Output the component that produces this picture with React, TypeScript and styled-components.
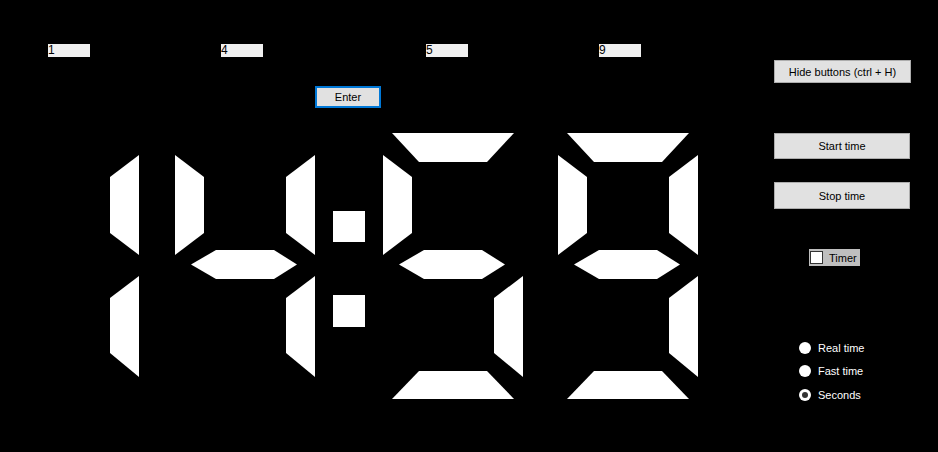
import React from "react";
import styled, { createGlobalStyle } from "styled-components";

const Global = createGlobalStyle`
  html, body { margin: 0; padding: 0; background: #000; }
  body { font-family: "Liberation Sans", Arial, sans-serif; }
  * { box-sizing: border-box; }
`;

const Window = styled.div`
  width: 938px;
  height: 452px;
  background: #000;
  display: flex;
  overflow: hidden;
`;

const Main = styled.div`
  width: 774px;
  display: flex;
  flex-direction: column;
  align-items: flex-start;
  padding-top: 44px;
`;

const InputRow = styled.div`
  display: flex;
  height: 13px;
`;

const Field = styled.input<{ $gap: number }>`
  margin: 0 0 0 ${(p) => p.$gap}px;
  width: 42px;
  height: 13px;
  border: none;
  padding: 0 0 0 0;
  background: #f0f0f0;
  font: 12px/13px "Liberation Sans", Arial, sans-serif;
  color: #000;
  outline: none;
`;

const WinButton = styled.button<{ $w: number; $h: number; $mt: number; $ml?: number; $focused?: boolean }>`
  margin: ${(p) => p.$mt}px 0 0 ${(p) => p.$ml ?? 0}px;
  width: ${(p) => p.$w}px;
  height: ${(p) => p.$h}px;
  padding: 0;
  background: #e1e1e1;
  border: ${(p) => (p.$focused ? "2px solid #0078d7" : "1px solid #adadad")};
  font: 11px "Liberation Sans", Arial, sans-serif;
  color: #000;
  display: flex;
  align-items: center;
  justify-content: center;
  cursor: default;
`;

const Clock = styled.svg`
  margin: 12px 0 0 100px;
  display: block;
`;

const Side = styled.div`
  flex: 1;
  display: flex;
  flex-direction: column;
  align-items: flex-start;
  padding-top: 60px;
`;

const CheckControl = styled.label`
  margin: 40px 0 0 35px;
  width: 51px;
  height: 17px;
  background: #bfbfbf;
  display: flex;
  align-items: center;
  font: 11px "Liberation Sans", Arial, sans-serif;
  color: #000;
`;

const CheckBox = styled.span`
  width: 13px;
  height: 13px;
  margin-left: 1px;
  background: #fff;
  border: 1px solid #333;
`;

const CheckText = styled.span`
  margin-left: 6px;
`;

const RadioGroup = styled.div`
  margin: 70px 0 0 25px;
  display: flex;
  flex-direction: column;
`;

const RadioRow = styled.label`
  height: 23.5px;
  display: flex;
  align-items: center;
  font: 11px "Liberation Sans", Arial, sans-serif;
  color: #fff;
`;

const RadioDot = styled.span<{ $checked?: boolean }>`
  width: 12px;
  height: 12px;
  border-radius: 50%;
  background: #fff;
  display: flex;
  align-items: center;
  justify-content: center;
  &::after {
    content: "";
    width: 6px;
    height: 6px;
    border-radius: 50%;
    background: ${(p) => (p.$checked ? "#333" : "transparent")};
  }
`;

const RadioText = styled.span`
  margin-left: 7px;
`;

type Seg = "a" | "b" | "c" | "d" | "e" | "f" | "g";

const SEGMENTS: Record<Seg, [number, number][]> = {
  a: [[9, 133], [131, 133], [104, 162], [36, 162]],
  b: [[140, 155], [140, 255], [111, 233], [111, 177]],
  c: [[140, 276], [140, 377], [111, 353], [111, 298]],
  d: [[9, 399], [131, 399], [104, 371], [36, 371]],
  e: [[0, 276], [29, 298], [29, 353], [0, 377]],
  f: [[0, 155], [29, 177], [29, 233], [0, 255]],
  g: [[16, 264.5], [41, 250], [99, 250], [122, 264.5], [99, 279], [41, 279]],
};

const DIGIT_SEGS: Record<string, Seg[]> = {
  "1": ["b", "c"],
  "4": ["f", "g", "b", "c"],
  "5": ["a", "f", "g", "c", "d"],
  "9": ["a", "b", "f", "g", "c", "d"],
};

const Digit: React.FC<{ value: string; x: number }> = ({ value, x }) => (
  <g>
    {DIGIT_SEGS[value].map((s) => (
      <polygon key={s} points={SEGMENTS[s].map(([px, py]) => `${px + x},${py}`).join(" ")} fill="#fff" />
    ))}
  </g>
);

export default function App() {
  return (
    <>
      <Global />
      <Window>
        <Main>
          <InputRow>
            <Field $gap={48} defaultValue="1" />
            <Field $gap={131} defaultValue="4" />
            <Field $gap={163} defaultValue="5" />
            <Field $gap={131} defaultValue="9" />
          </InputRow>
          <WinButton $w={66} $h={22} $mt={29} $ml={315} $focused>
            Enter
          </WinButton>
          <Clock width={620} height={290} viewBox="100 120 620 290">
            <Digit value="1" x={-1} />
            <Digit value="4" x={175} />
            <rect x={333} y={211} width={32} height={31} fill="#fff" />
            <rect x={333} y={295} width={32} height={32} fill="#fff" />
            <Digit value="5" x={383} />
            <Digit value="9" x={558} />
          </Clock>
        </Main>
        <Side>
          <WinButton $w={137} $h={23} $mt={0}>Hide buttons (ctrl + H)</WinButton>
          <WinButton $w={136} $h={26} $mt={50}>Start time</WinButton>
          <WinButton $w={136} $h={27} $mt={23}>Stop time</WinButton>
          <CheckControl>
            <CheckBox />
            <CheckText>Timer</CheckText>
          </CheckControl>
          <RadioGroup>
            <RadioRow>
              <RadioDot />
              <RadioText>Real time</RadioText>
            </RadioRow>
            <RadioRow>
              <RadioDot />
              <RadioText>Fast time</RadioText>
            </RadioRow>
            <RadioRow>
              <RadioDot $checked />
              <RadioText>Seconds</RadioText>
            </RadioRow>
          </RadioGroup>
        </Side>
      </Window>
    </>
  );
}
